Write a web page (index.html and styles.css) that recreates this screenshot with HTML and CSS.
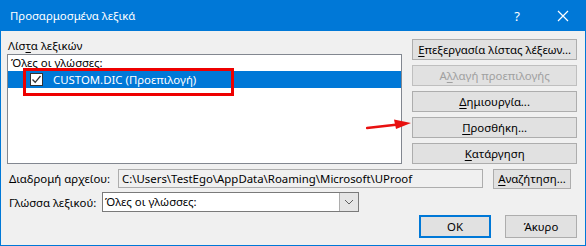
FILE: index.html
```html
<!DOCTYPE html>
<html lang="el">
<head>
<meta charset="utf-8">
<link rel="stylesheet" href="styles.css">
</head>
<body>
<div class="window">
  <div class="titlebar">
    <span class="title">Προσαρμοσμένα λεξικά</span>
    <span class="help">?</span>
    <span class="close"><svg width="12" height="12" viewBox="0 0 12 12"><path d="M1 1L11 11M11 1L1 11" stroke="#fff" stroke-width="1.2"/></svg></span>
  </div>
  <div class="content">
    <div class="top">
      <div class="left">
        <div class="label">Λίσ<u>τ</u>α λεξικών</div>
        <div class="listbox">
          <div class="group">Όλες οι γλώσσες:</div>
          <div class="row selected">
            <span class="check"><svg width="11" height="11" viewBox="0 0 11 11"><path d="M1.5 5.5L4.2 8.3L9.5 2" fill="none" stroke="#333" stroke-width="1.3"/></svg></span>
            <span class="rowtext">CUSTOM.DIC (Προεπιλογή)</span>
          </div>
        </div>
      </div>
      <div class="right">
        <div class="btn"><u>Ε</u>πεξεργασία λίστας λέξεων...</div>
        <div class="btn disabled">Α<u>λ</u>λαγή προεπιλογής</div>
        <div class="btn"><u>Δ</u>ημιουργία...</div>
        <div class="btn"><u>Π</u>ροσθήκη...</div>
        <div class="btn"><u>Κ</u>ατάργηση</div>
      </div>
    </div>
    <div class="pathrow">
      <span class="rowlabel pathlabel">Διαδρομή αρχείου:</span>
      <div class="pathbox">C:\Users\TestEgo\AppData\Roaming\Microsoft\UProof</div>
      <div class="btn browse"><u>Α</u>ναζήτηση...</div>
    </div>
    <div class="langrow">
      <span class="rowlabel langlabel">Γλώσσα λεξικού:</span>
      <div class="combo">
        <span class="combotext">Όλες οι γλώσσες:</span>
        <span class="drop"><svg width="10" height="6" viewBox="0 0 10 6"><path d="M1 1L5 5L9 1" fill="none" stroke="#606060" stroke-width="1"/></svg></span>
      </div>
    </div>
    <div class="actions">
      <div class="btn ok">OK</div>
      <div class="btn cancel">Άκυρο</div>
    </div>
  </div>
  <div class="highlight"></div>
  <svg class="arrow" width="50" height="14" viewBox="0 0 50 14"><path d="M1 10L32 6.5" stroke="#e81010" stroke-width="2.5" stroke-linecap="round"/><path d="M28 1.5L45 5L30 11Z" fill="#e81010"/></svg>
</div>
</body>
</html>
```

FILE: styles.css
```css
* { box-sizing: border-box; }
html, body { margin: 0; padding: 0; }
body {
  font-family: "Noto Sans", "DejaVu Sans", sans-serif;
  font-size: 11.4px;
  color: #000;
  background: #fff;
}
.window {
  position: relative;
  width: 586px;
  height: 246px;
  background: #f0f0f0;
  border: 1px solid #0078d7;
  border-top: none;
  overflow: hidden;
}
.titlebar {
  height: 31px;
  margin: 0 -1px;
  background: #0078d7;
  color: #fff;
  display: flex;
  align-items: center;
  padding-left: 10px;
}
.title { font-size: 11.4px; flex: 1; }
.help { width: 30px; text-align: center; font-size: 13px; margin-right: 8px; }
.close { width: 46px; display: flex; justify-content: center; align-items: center; }
.content {
  padding: 8px 8px 0 6px;
}
.top { display: flex; gap: 10px; }
.left { width: 396px; }
.label { height: 15px; line-height: 13px; padding-left: 1px; }
.label u, .btn u { text-decoration: underline; text-underline-offset: 2px; }
.listbox {
  height: 110px;
  background: #fff;
  border: 1px solid #828790;
}
.group { height: 16px; line-height: 14px; padding-left: 3px; padding-top: 1px; }
.row {
  height: 17px;
  display: flex;
  align-items: center;
}
.row.selected { background: #0078d7; color: #fff; }
.check {
  width: 13px; height: 13px;
  margin-left: 22px;
  background: #fff;
  border: 1px solid #333;
  display: flex; align-items: center; justify-content: center;
}
.rowtext { margin-left: 10px; }
.right { width: 165px; display: flex; flex-direction: column; gap: 5px; }
.btn {
  height: 21px;
  background: #e1e1e1;
  border: 1px solid #adadad;
  display: flex;
  align-items: center;
  justify-content: center;
  line-height: 1;
  white-space: nowrap;
}
.btn.disabled { color: #a0a0a0; border-color: #bfbfbf; background: #e1e1e1; }
.rowlabel { padding-left: 2px; white-space: nowrap; }
.pathlabel { width: 111px; }
.langlabel { width: 95px; }
.pathrow {
  display: flex;
  align-items: center;
  margin-top: 5px;
  height: 19px;
}
.pathbox {
  width: 365px;
  height: 19px;
  border: 1px solid #adadad;
  background: #f0f0f0;
  padding-left: 3px;
  line-height: 17px;
  white-space: nowrap;
  overflow: hidden;
}
.btn.browse { margin-left: 10px; width: 78px; height: 20px; }
.langrow {
  display: flex;
  align-items: center;
  margin-top: 4px;
  height: 20px;
}
.combo {
  width: 257px;
  height: 20px;
  border: 1px solid #7a7a7a;
  background: #fff;
  display: flex;
}
.combotext { flex: 1; padding-left: 2px; line-height: 18px; }
.drop {
  width: 19px;
  background: #e5e5e5;
  border-left: 1px solid #adadad;
  display: flex; align-items: center; justify-content: center;
}
.actions {
  display: flex;
  justify-content: flex-end;
  gap: 14px;
  margin-top: 3px;
}
.btn.ok, .btn.cancel { width: 72px; height: 23px; }
.btn.ok { border: 2px solid #0078d7; }
.highlight {
  position: absolute;
  left: 22px;
  top: 68px;
  width: 211px;
  height: 28px;
  border: 3px solid #ee0000;
}
.arrow { position: absolute; left: 365px; top: 118px; }
```
